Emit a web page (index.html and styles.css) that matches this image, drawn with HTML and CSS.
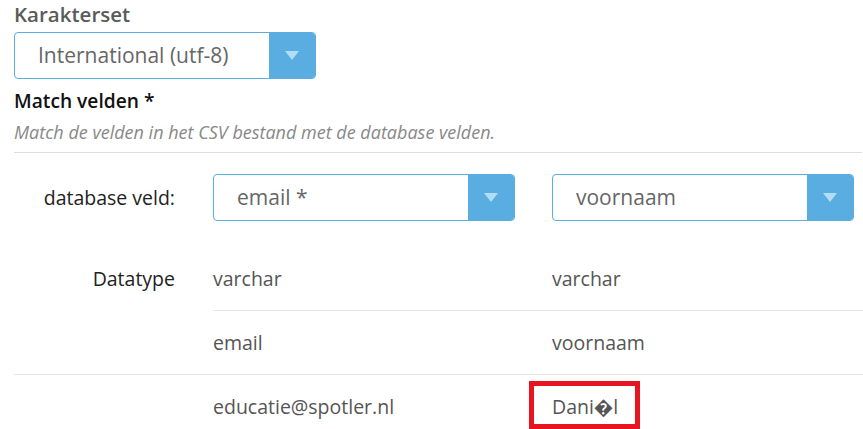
FILE: index.html
```html
<!DOCTYPE html>
<html lang="nl">
<head>
<meta charset="utf-8">
<title>Import</title>
<link rel="stylesheet" href="styles.css">
</head>
<body>
<div class="page">
  <div class="field-label">Karakterset</div>
  <div class="select select-charset">
    <span class="select-text">International (utf-8)</span>
    <span class="select-btn"><svg width="14" height="9" viewBox="0 0 14 9"><path d="M0 0 H14 L7 9 Z" fill="#b3dcf5"/></svg></span>
  </div>
  <div class="section-title">Match velden *</div>
  <div class="help">Match de velden in het CSV bestand met de database velden.</div>
  <div class="mapping">
    <div class="cell label row1">database veld:</div>
    <div class="cell row1">
      <div class="select">
        <span class="select-text">email *</span>
        <span class="select-btn"><svg width="14" height="9" viewBox="0 0 14 9"><path d="M0 0 H14 L7 9 Z" fill="#b3dcf5"/></svg></span>
      </div>
    </div>
    <div class="cell row1">
      <div class="select">
        <span class="select-text">voornaam</span>
        <span class="select-btn"><svg width="14" height="9" viewBox="0 0 14 9"><path d="M0 0 H14 L7 9 Z" fill="#b3dcf5"/></svg></span>
      </div>
    </div>

    <div class="cell label">Datatype</div>
    <div class="cell value">varchar</div>
    <div class="cell value">varchar</div>

    <div class="cell"></div>
    <div class="cell value sep">email</div>
    <div class="cell value sep">voornaam</div>

    <div class="cell sep"></div>
    <div class="cell value sep">educatie@spotler.nl</div>
    <div class="cell value sep highlight-cell">Dani&#xFFFD;l<span class="highlight"></span></div>
  </div>
</div>
</body>
</html>
```
FILE: styles.css
```css
html, body {
  margin: 0;
  padding: 0;
  background: #ffffff;
}
body {
  font-family: "Open Sans", "DejaVu Sans", sans-serif;
  color: #555555;
  overflow: hidden;
}
.page {
  padding: 0 0 0 14px;
}
.field-label {
  font-size: 20.5px;
  font-weight: 600;
  color: #5a5a5a;
  line-height: 28px;
  height: 32px;
  box-sizing: border-box;
}
.select {
  display: flex;
  width: 302px;
  height: 47px;
  box-sizing: border-box;
  border: 1px solid #5aade0;
  border-radius: 4px;
  overflow: hidden;
  background: #fff;
}
.select-text {
  flex: 1;
  padding-left: 23px;
  font-size: 21px;
  line-height: 44px;
  color: #666666;
}
.select-btn {
  width: 46px;
  background: #5aade0;
  display: flex;
  align-items: center;
  justify-content: center;
}
.section-title {
  margin-top: 10px;
  font-size: 19.2px;
  font-weight: 600;
  color: #111111;
  line-height: 24px;
}
.help {
  margin-top: 8px;
  font-size: 18px;
  font-style: italic;
  color: #888888;
  line-height: 22px;
  padding-bottom: 9px;
  border-bottom: 1px solid #dddddd;
  margin-right: 1px;
}
.mapping {
  display: grid;
  grid-template-columns: 199px 339px 1fr;
}
.cell {
  height: 63px;
  line-height: 63px;
  font-size: 19.5px;
}
.row1 {
  height: 94px;
  padding-top: 21px;
  box-sizing: border-box;
  line-height: 47px;
}
.label {
  text-align: right;
  padding-right: 38px;
  color: #222222;
  font-size: 19.5px;
}
.value {
  color: #555555;
}
.sep {
  border-top: 1px solid #e6e6e6;
}
.highlight-cell {
  position: relative;
}
.highlight {
  position: absolute;
  left: -23px;
  top: 6px;
  width: 111px;
  height: 48px;
  box-sizing: border-box;
  border: 5px solid #e8141f;
}
```
